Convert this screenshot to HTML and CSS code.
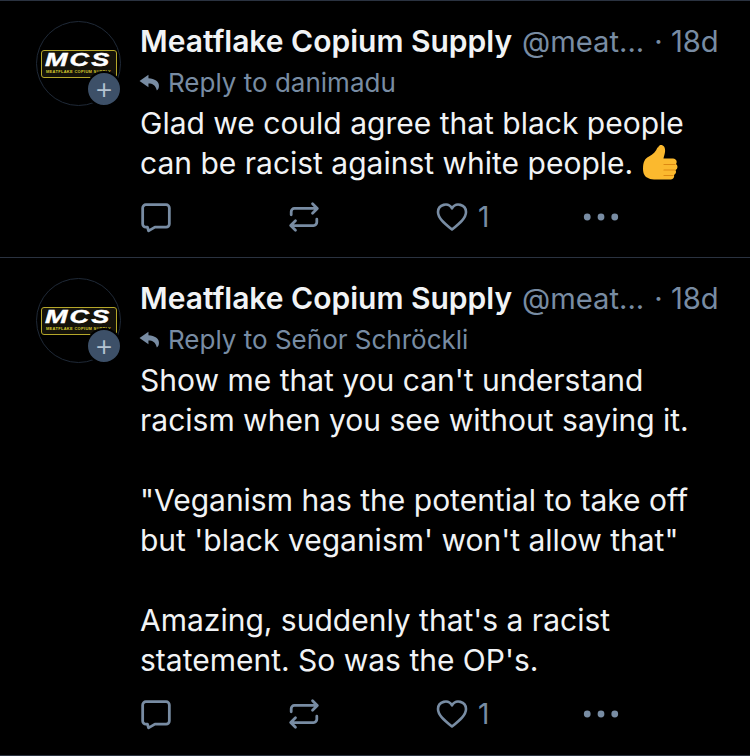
FILE: index.html
```html
<!DOCTYPE html>
<html lang="en">
<head>
<meta charset="utf-8">
<title>Replies</title>
<link rel="stylesheet" href="styles.css">
</head>
<body>
<svg class="defs" width="0" height="0" aria-hidden="true">
  <symbol id="i-reply" viewBox="0 0 30 30"><path d="M5.500 3.500h19a3 3 0 0 1 3 3v15a3 3 0 0 1-3 3H14l-6 3.500-1-3.500H5.500a3 3 0 0 1-3-3v-15a3 3 0 0 1 3-3z" fill="none" stroke="currentColor" stroke-width="2.600" stroke-linejoin="round"/></symbol>
  <symbol id="i-repost" viewBox="0 0 30 30"><g fill="none" stroke="currentColor" stroke-width="2.600" stroke-linecap="round" stroke-linejoin="round"><path d="M3 13V10a3 3 0 0 1 3-3h21M23 2.500 27.500 7 23 11.500"/><path d="M27 17v3a3 3 0 0 1-3 3H3M7 18.500 2.500 23 7 27.500"/></g></symbol>
  <symbol id="i-heart" viewBox="0 0 32 30"><path d="M16 27.500C8 21 2 16 2 10a7.500 7.500 0 0 1 14-3.600A7.500 7.500 0 0 1 30 10c0 6-6 11-14 17.500z" fill="none" stroke="currentColor" stroke-width="2.600" stroke-linejoin="round"/></symbol>
  <symbol id="i-more" viewBox="0 0 34 8"><circle cx="4" cy="4" r="3.200" fill="currentColor"/><circle cx="17" cy="4" r="3.200" fill="currentColor"/><circle cx="30" cy="4" r="3.200" fill="currentColor"/></symbol>
  <symbol id="i-back" viewBox="0 0 20 16"><path d="M9 .5.500 6.500 9 12.500V9c4 0 6.500 1.500 8 6.500 1.500-1 2-2.500 2-4.500 0-4-4-6.500-10-7z" fill="currentColor"/></symbol>
  <symbol id="i-thumb" viewBox="0 0 36 38"><path d="M19 1c3 0 4.500 3 4 7-.3 2.500-1.200 4.500-1.500 6.500H31a3.500 3.500 0 0 1 3 5.500 3.500 3.500 0 0 1-.5 6 3.500 3.500 0 0 1-1.500 5 3.500 3.500 0 0 1-3 4.500H12c-3 0-5-1-7-2-2.500-1.500-4-4-4-9 0-7 2-10 6-12 4-2 7-5 8.500-9C16.500 4 16.500 1 19 1z" fill="#fbb92e"/><path d="M22 20.500h11M22 26h10.500M22 31.500h9" stroke="#dd8a12" stroke-width="1.200" fill="none" stroke-linecap="round"/></symbol>
</svg>

<main class="thread">
  <article class="post post-short">
    <div class="avatar">
      <div class="logo"><span class="logo-big">MCS</span><span class="logo-small">MEATFLAKE COPIUM SUPPLY</span></div>
      <span class="follow">+</span>
    </div>
    <div class="content">
      <div class="meta"><strong class="name">Meatflake Copium Supply</strong><span class="handle">@meat...</span><span class="time">· 18d</span></div>
      <div class="reply-to"><svg class="back"><use href="#i-back"/></svg>Reply to danimadu</div>
      <p class="text">Glad we could agree that black people<br>can be racist against white people. <svg class="thumb"><use href="#i-thumb"/></svg></p>
      <div class="actions">
        <span class="action"><svg class="ic"><use href="#i-reply"/></svg></span>
        <span class="action"><svg class="ic"><use href="#i-repost"/></svg></span>
        <span class="action"><svg class="ic"><use href="#i-heart"/></svg><span class="count">1</span></span>
        <span class="action more"><svg class="dots"><use href="#i-more"/></svg></span>
      </div>
    </div>
  </article>

  <article class="post">
    <div class="avatar">
      <div class="logo"><span class="logo-big">MCS</span><span class="logo-small">MEATFLAKE COPIUM SUPPLY</span></div>
      <span class="follow">+</span>
    </div>
    <div class="content">
      <div class="meta"><strong class="name">Meatflake Copium Supply</strong><span class="handle">@meat...</span><span class="time">· 18d</span></div>
      <div class="reply-to"><svg class="back"><use href="#i-back"/></svg>Reply to Señor Schröckli</div>
      <p class="text">Show me that you can't understand<br>racism when you see without saying it.<br><br>"Veganism has the potential to take off<br>but 'black veganism' won't allow that"<br><br>Amazing, suddenly that's a racist<br>statement. So was the OP's.</p>
      <div class="actions">
        <span class="action"><svg class="ic"><use href="#i-reply"/></svg></span>
        <span class="action"><svg class="ic"><use href="#i-repost"/></svg></span>
        <span class="action"><svg class="ic"><use href="#i-heart"/></svg><span class="count">1</span></span>
        <span class="action more"><svg class="dots"><use href="#i-more"/></svg></span>
      </div>
    </div>
  </article>
</main>
</body>
</html>
```
FILE: styles.css
```css
* { box-sizing: border-box; }
html, body { margin: 0; padding: 0; background: #000; }
body {
  width: 750px;
  height: 756px;
  overflow: hidden;
  font-family: Inter, "Liberation Sans", sans-serif;
  color: #f1f3f5;
}
.defs { position: absolute; }
.thread { display: flex; flex-direction: column; }
.post {
  display: flex;
  gap: 19px;
  padding: 20px 20px 0 36px;
  border-top: 1px solid #2a3240;
  height: 257px;
}
.post:last-child { height: 499px; border-bottom: 1px solid #2a3240; }
.avatar {
  position: relative;
  flex: none;
  width: 85px;
  height: 85px;
  border: 1px solid #1f2937;
  border-radius: 50%;
  display: flex;
  align-items: center;
  justify-content: center;
}
.logo {
  width: 76px;
  height: 28px;
  margin-top: 1px;
  border: 1.500px solid #b5a72a;
  border-radius: 3px;
  background: #14120a;
  display: flex;
  flex-direction: column;
  align-items: center;
  overflow: hidden;
}
.logo-big {
  font: italic 700 18px/18px "Liberation Sans", sans-serif;
  color: #fff;
  transform: scaleX(1.5);
  letter-spacing: 1.500px;
  -webkit-text-stroke: .4px #fff;
}
.logo-small {
  font: 700 4px/5px "Liberation Sans", sans-serif;
  color: #d8cb2e;
  white-space: nowrap;
  letter-spacing: .3px;
}
.follow {
  position: absolute;
  right: -2px;
  bottom: -2px;
  width: 36px;
  height: 36px;
  border: 2px solid #000;
  border-radius: 50%;
  background: #3d5068;
  color: #b4c3d2;
  font: 300 30px/30px Inter, sans-serif;
  text-align: center;
}
.content { flex: 1; min-width: 0; }
.meta {
  display: flex;
  align-items: baseline;
  height: 41px;
  line-height: 41px;
  white-space: nowrap;
}
.name { font-weight: 600; font-size: 30px; color: #f1f3f5; }
.handle { margin-left: 10px; color: #788ca3; font-size: 29.200px; }
.time { margin-left: 10px; color: #788ca3; font-size: 29.200px; }
.reply-to {
  display: flex;
  align-items: center;
  gap: 8px;
  height: 41px;
  font-size: 26px;
  color: #788ca3;
  white-space: nowrap;
}
.back { width: 21px; height: 17px; margin-left: -1px; color: #788ca3; }
.text {
  margin: 0;
  font-size: 30px;
  line-height: 40px;
  color: #f1f3f5;
  white-space: nowrap;
}
.thumb { width: 36px; height: 38px; vertical-align: -8px; }
.actions {
  display: flex;
  align-items: center;
  height: 40px;
  margin-top: 14px;
  color: #788ca3;
}
.action { display: flex; align-items: center; width: 148px; }
.action.more { width: auto; margin-left: -1px; }
.ic { width: 32px; height: 32px; }
.count { margin-left: 10px; font-size: 28px; line-height: 32px; }
.dots { width: 36px; height: 10px; }
```
